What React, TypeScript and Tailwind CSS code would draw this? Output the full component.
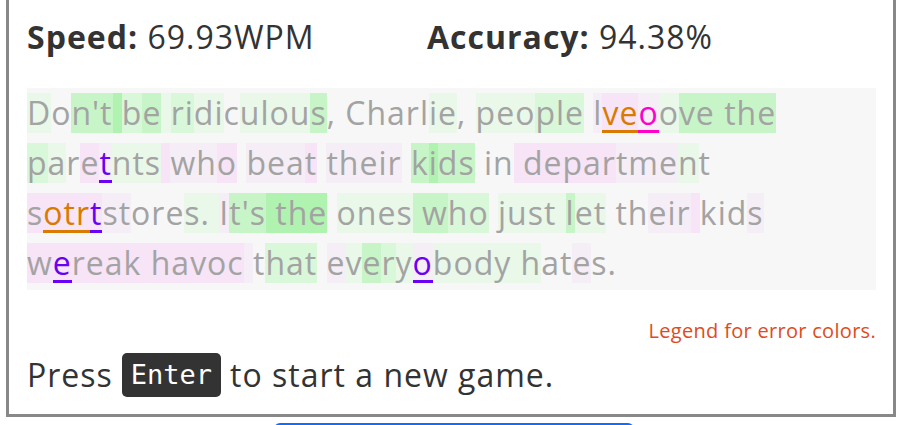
import React from "react";

//Highlight classes for each code
const CELL: Record<string, string> = {
  ".": "",
  a: "bg-[#e9f8e9]",
  b: "bg-[#d9f7d9]",
  c: "bg-[#c8f5c8]",
  d: "bg-[#b0f2b0]",
  p: "bg-[#f7e4f7]",
  q: "bg-[#f6eef6]",
  O: "bg-[#f7e4f7] text-[#d97b00] border-b-[3px] border-[#d97b00]",
  M: "bg-[#f6eef6] text-[#ff00cc] border-b-[3px] border-[#ff00cc]",
  U: "bg-[#f7e4f7] text-[#6a00f4] border-b-[3px] border-[#6a00f4]",
  V: "bg-[#f6eef6] text-[#6a00f4] border-b-[3px] border-[#6a00f4]",
};

const LINES: [string, string][] = [
  [
    "Don't be ridiculous, Charlie, people lveoove the",
    "a.cccdbcabbaa.aaaac.......aa..aaabbb.qOOMacccccc",
  ],
  [
    "paretnts who beat their kids in department",
    "ba.pVaaapqqp.qqqp.qqqqq.cdcc...ppppppqqqa.",
  ],
  [
    "sotrtstores. It's the ones who just let their kids",
    "pOOOUqq...aaaqcccdddd.aaaaccbb.aaaaacaa...qqqp...q",
  ],
  [
    "wereak havoc that everyobody hates.",
    "pUppppppppppq.bbb.qacbaVaaaaaa..q..",
  ],
];

const TypedLine = ({ text, codes }: { text: string; codes: string }) => {
  return (
    <div className="flex h-[50px] items-center whitespace-pre">
      {text.split("").map((ch, i) => (
        <span
          key={i}
          className={`box-border inline-block h-[40px] leading-[40px] ${CELL[codes[i]] ?? ""}`}
        >
          {ch}
        </span>
      ))}
    </div>
  );
};

export default function App() {
  return (
    <div className="h-[425px] w-[907px] overflow-hidden bg-white font-['Open_Sans',sans-serif] text-[#333]">
      <div className="ml-[6px] w-[890px] border-[3px] border-t-0 border-[#888] pb-[16px] pl-[18px] pr-[17px] pt-[14px]">
        <div className="flex h-[45px] text-[32px] leading-[45px] tracking-[1px]">
          <div className="w-[400px]">
            <span className="font-bold">Speed:</span> 69.93WPM
          </div>
          <div>
            <span className="font-bold">Accuracy:</span> 94.38%
          </div>
        </div>

        <div className="mt-[29px] bg-[#f7f7f7] pb-[2px] text-[32px] tracking-[1px] text-[#a3a3a3]">
          {LINES.map(([text, codes], i) => (
            <TypedLine key={i} text={text} codes={codes} />
          ))}
        </div>

        <div className="mt-[27px] h-[28px] text-right text-[20px] leading-[28px] tracking-[0.3px] text-[#e04b1c]">
          Legend for error colors.
        </div>

        <div className="mt-[6px] flex h-[47px] items-center gap-[9px] text-[32px] leading-[47px] tracking-[1px]">
          <span>Press</span>
          <kbd className="h-[44px] rounded-[5px] bg-[#333] px-[9px] font-['DejaVu_Sans_Mono',monospace] text-[27px] leading-[44px] tracking-normal text-white">
            Enter
          </kbd>
          <span>to start a new game.</span>
        </div>
      </div>

      <div className="mx-auto mt-[6px] h-[40px] w-[360px] rounded-[6px] bg-[#0d6efd]" />
    </div>
  );
}
